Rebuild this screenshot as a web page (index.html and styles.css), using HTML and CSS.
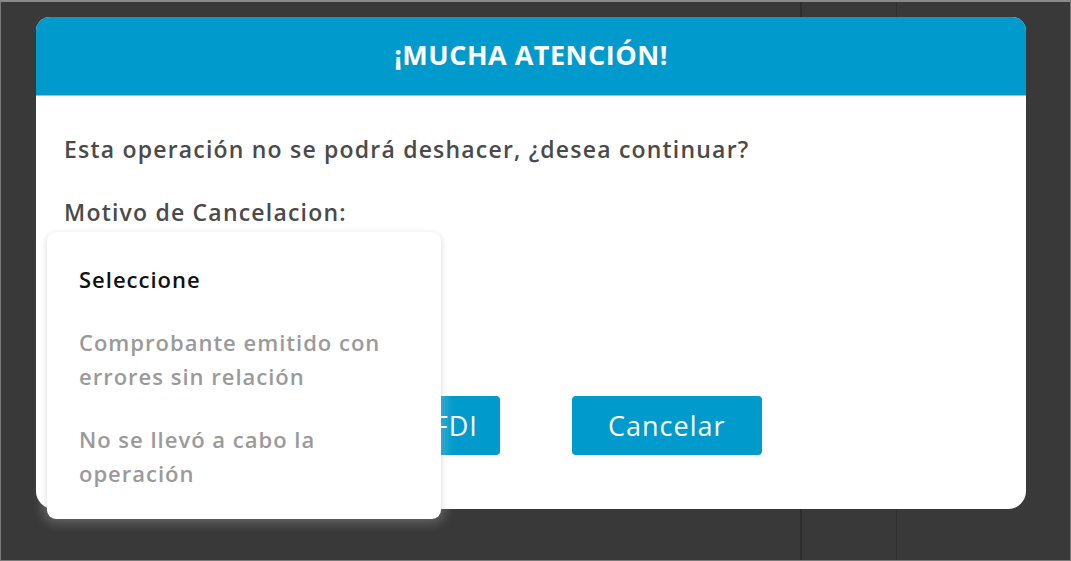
FILE: index.html
```html
<!DOCTYPE html>
<html lang="es">
<head>
    <meta charset="UTF-8">
    <meta name="viewport" content="width=device-width, initial-scale=1.0">
    <title>Cancelar CFDI</title>
    <link rel="stylesheet" href="styles.css">
</head>
<body>
    <div class="screen">
        <div class="pane pane-main"></div>
        <div class="pane pane-side"></div>
        <div class="pane pane-rest"></div>

        <div class="modal">
            <div class="modal-header">
                <h2>¡MUCHA ATENCIÓN!</h2>
            </div>
            <div class="modal-body">
                <p class="warning">Esta operación no se podrá deshacer, ¿desea continuar?</p>
                <label class="reason-label">Motivo de Cancelacion:</label>
                <div class="select-space"></div>
                <div class="actions">
                    <button class="btn">Cancelar CFDI</button>
                    <button class="btn">Cancelar</button>
                </div>
            </div>
        </div>

        <ul class="dropdown">
            <li class="option selected">Seleccione</li>
            <li class="option">Comprobante emitido con errores sin relación</li>
            <li class="option">No se llevó a cabo la operación</li>
        </ul>
    </div>
</body>
</html>
```

FILE: styles.css
```css
* {
    box-sizing: border-box;
}

body {
    margin: 0;
    font-family: "Open Sans", Arial, sans-serif;
    background-color: #393939;
}

.screen {
    position: relative;
    display: flex;
    width: 1071px;
    height: 561px;
    border: 1px solid #7a7a7a;
    border-top: 2px solid #8a8a8a;
    overflow: hidden;
}

.pane {
    height: 100%;
    background-color: #393939;
}

.pane-main {
    width: 801px;
    border-right: 2px solid #2f2f2f;
}

.pane-side {
    width: 95px;
    border-right: 1px solid #303030;
    box-shadow: 3px 0 4px rgba(0, 0, 0, 0.25);
}

.pane-rest {
    flex: 1;
}

.modal {
    position: absolute;
    left: 35px;
    top: 15px;
    width: 990px;
    height: 492px;
    background-color: #fff;
    border-radius: 14px 14px 18px 18px;
    overflow: hidden;
}

.modal-header {
    height: 79px;
    padding-bottom: 4px;
    background-color: #009bcc;
    display: flex;
    align-items: center;
    justify-content: center;
    border-bottom: 1px solid #7fcbe3;
}

.modal-header h2 {
    margin: 0;
    color: #fff;
    font-size: 27px;
    font-weight: 700;
    letter-spacing: 0.5px;
}

.modal-body {
    padding: 37px 28px 0;
    color: #4a4a4a;
    font-size: 23px;
    font-weight: 600;
    letter-spacing: 1.2px;
}

.warning {
    margin: 0 0 31px;
}

.reason-label {
    display: block;
}

.select-space {
    height: 168px;
}

.actions {
    display: flex;
    justify-content: center;
    gap: 72px;
    padding-right: 32px;
    letter-spacing: 0;
}

.btn {
    height: 59px;
    min-width: 190px;
    padding: 0 22px;
    background-color: #009bcc;
    color: #fff;
    border: none;
    border-radius: 4px;
    font-family: inherit;
    font-size: 27px;
    font-weight: 400;
    letter-spacing: 1px;
}

.dropdown {
    position: absolute;
    left: 46px;
    top: 230px;
    width: 394px;
    margin: 0;
    padding: 20px 32px 10px;
    list-style: none;
    background-color: #fff;
    border-radius: 9px;
    box-shadow: 0 0 12px 3px rgba(255, 255, 255, 0.3), 0 2px 6px rgba(0, 0, 0, 0.2);
}

.option {
    padding: 10px 0 19px;
    color: #9a9a9a;
    font-size: 22px;
    font-weight: 600;
    line-height: 34px;
    letter-spacing: 1px;
}

.option.selected {
    color: #111;
}
```
